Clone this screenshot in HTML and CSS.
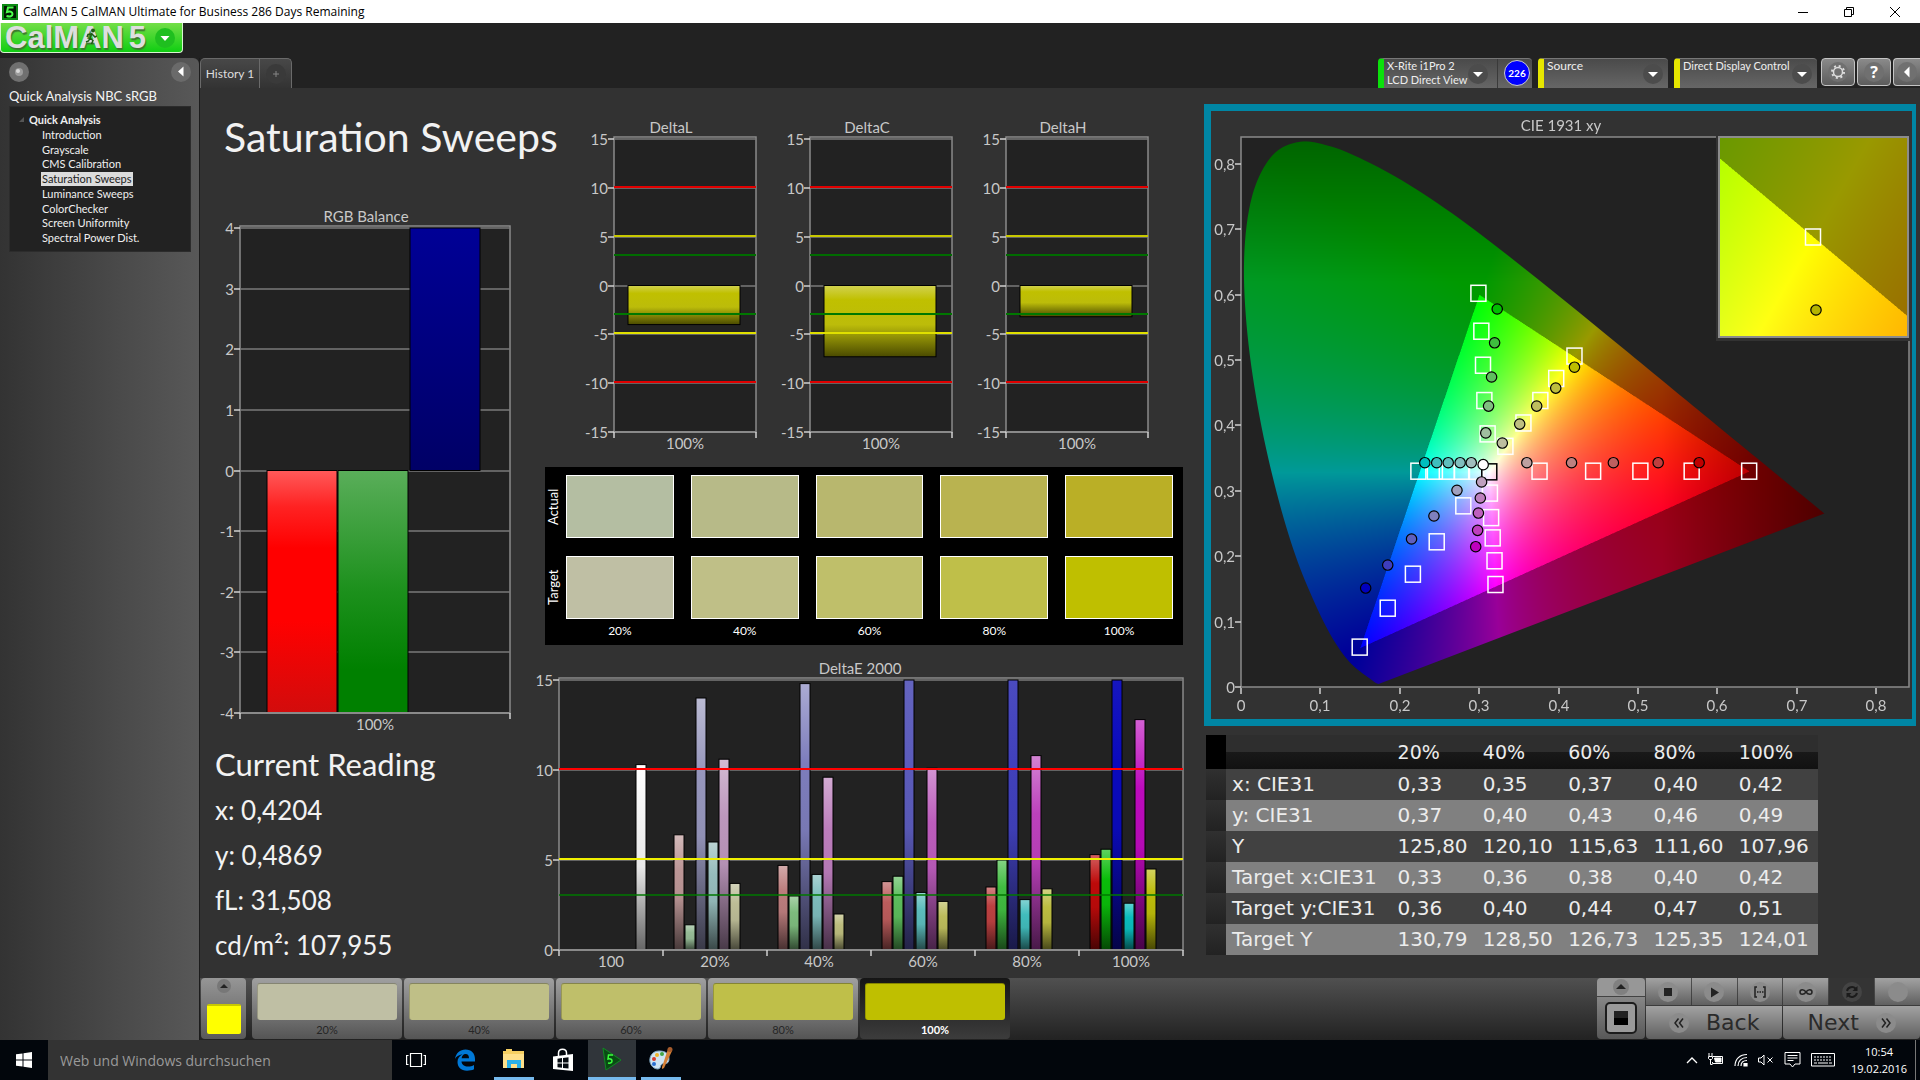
FILE: index.html
```html
<!DOCTYPE html>
<html lang="en">
<head>
    <meta charset="UTF-8">
    <meta name="viewport" content="width=device-width, initial-scale=1.0">
    <title>CalMAN 5 CalMAN Ultimate for Business</title>
    <link rel="stylesheet" href="styles.css">
</head>
<body>
    <div class="titlebar">
        <svg class="app-icon" width="16" height="16" viewBox="0 0 16 16"><rect width="16" height="16" fill="#031a03"/><rect x="1" y="1" width="14" height="14" fill="none" stroke="#0b8a12" stroke-width="2"/><path d="M11.500 3.500H6L5 8c3-1 5.500-.500 5.500 2S8 13 4.500 12" fill="none" stroke="#4dff4d" stroke-width="2"/></svg>
        <span class="window-title">CalMAN 5 CalMAN Ultimate for Business 286 Days Remaining</span>
        <button class="win-btn" aria-label="Minimize"><svg width="12" height="12" viewBox="0 0 12 12"><path d="M1 6.500h10"/></svg></button>
        <button class="win-btn" aria-label="Restore"><svg width="12" height="12" viewBox="0 0 12 12"><path d="M1.500 3.500h7v7h-7zM3.500 3.500v-2h7v7h-2"/></svg></button>
        <button class="win-btn" aria-label="Close"><svg width="12" height="12" viewBox="0 0 12 12"><path d="M1 1l10 10M11 1L1 11"/></svg></button>
    </div>

    <div class="header">
        <button class="logo">
            <span class="logo-text">CalMAN<span class="logo-five">5</span></span>
            <svg class="logo-runner" width="12" height="18" viewBox="0 0 12 18"><circle cx="8" cy="2.500" r="2" fill="#1d5a14"/><path d="M7 5L5 10l3 2.500L6.500 16M5 10L3.500 13 1 14M7 6l3 3 2-1M6.500 6L3 6.500 2 9" fill="none" stroke="#1d5a14" stroke-width="1.500"/></svg>
            <svg class="logo-caret" width="20" height="20" viewBox="0 0 20 20"><circle cx="10" cy="10" r="10" fill="#1fbf1f"/><path d="M5.500 8h9L10 13z" fill="#fff"/></svg>
        </button>
    </div>

    <div class="app">
        <aside class="sidebar">
            <div class="sidebar-top">
                <button class="round-btn" aria-label="Options"><svg width="20" height="20" viewBox="0 0 20 20"><circle cx="10" cy="10" r="10" fill="#707070"/><circle cx="10" cy="10" r="4" fill="#9c9c9c"/><circle cx="9" cy="9" r="2" fill="#d8d8d8"/></svg></button>
                <button class="round-btn" aria-label="Collapse"><svg width="20" height="20" viewBox="0 0 20 20"><circle cx="10" cy="10" r="10" fill="#6a6a6a"/><path d="M12.500 4.500v10L7 9.500z" fill="#fff"/></svg></button>
            </div>
            <div class="workflow-name">Quick Analysis NBC sRGB</div>
            <nav class="tree">
                <div class="tree-root"><svg width="5" height="5" viewBox="0 0 5 5"><path d="M5 0v5H0z" fill="#555"/></svg>Quick Analysis</div>
                <ul>
                    <li><a href="#">Introduction</a></li>
                    <li><a href="#">Grayscale</a></li>
                    <li><a href="#">CMS Calibration</a></li>
                    <li><a href="#" class="selected">Saturation Sweeps</a></li>
                    <li><a href="#">Luminance Sweeps</a></li>
                    <li><a href="#">ColorChecker</a></li>
                    <li><a href="#">Screen Uniformity</a></li>
                    <li><a href="#">Spectral Power Dist.</a></li>
                </ul>
            </nav>
        </aside>

        <div class="workspace">
            <div class="toolbar">
                <div class="tabs">
                    <button class="tab">History 1</button>
                    <button class="tab tab-add" aria-label="Add history"><svg width="20" height="20" viewBox="0 0 20 20"><circle cx="10" cy="10" r="10" fill="#3a3a3a"/><path d="M10 7v6M7 10h6" stroke="#858585"/></svg></button>
                </div>
                <div class="devices">
                    <button class="device device-meter">
                        <span class="device-text">X-Rite i1Pro 2<br>LCD Direct View</span>
                        <svg class="caret" width="20" height="20" viewBox="0 0 20 20"><circle cx="10" cy="10" r="10" fill="#4c4c4c"/><path d="M5 8h10l-5 5z" fill="#fff"/></svg>
                        <span class="badge-cell"><span class="badge">226</span></span>
                    </button>
                    <button class="device device-source">
                        <span class="device-text">Source</span>
                        <svg class="caret" width="20" height="20" viewBox="0 0 20 20"><circle cx="10" cy="10" r="10" fill="#4c4c4c"/><path d="M5 8h10l-5 5z" fill="#fff"/></svg>
                    </button>
                    <button class="device device-display">
                        <span class="device-text">Direct Display Control</span>
                        <svg class="caret" width="20" height="20" viewBox="0 0 20 20"><circle cx="10" cy="10" r="10" fill="#4c4c4c"/><path d="M5 8h10l-5 5z" fill="#fff"/></svg>
                    </button>
                    <div class="tool-buttons">
                        <button class="tool" aria-label="Settings"><svg width="20" height="20" viewBox="0 0 20 20"><circle cx="10" cy="10" r="10" fill="#707070"/><circle cx="10" cy="10" r="4.500" fill="none" stroke="#ddd" stroke-width="1.500"/><circle cx="10" cy="10" r="6" fill="none" stroke="#ddd" stroke-width="2" stroke-dasharray="2 2.712"/></svg></button>
                        <button class="tool tool-help" aria-label="Help"><span>?</span></button>
                        <button class="tool tool-last" aria-label="Collapse toolbar"><svg width="20" height="20" viewBox="0 0 20 20"><circle cx="10" cy="10" r="10" fill="#707070"/><path d="M12.500 4.500v11L7 10z" fill="#fff"/></svg></button>
                    </div>
                </div>
            </div>

            <main class="content">
                <section class="col-left">
                    <h1>Saturation Sweeps</h1>
                    <svg class="chart" id="rgbBalance" viewBox="0 0 330 540"></svg>
                    <div class="reading">
                        <h2>Current Reading</h2>
                        <p>x: 0,4204</p>
                        <p>y: 0,4869</p>
                        <p>fL: 31,508</p>
                        <p>cd/m²: 107,955</p>
                    </div>
                </section>

                <section class="col-center">
                    <div class="delta-row">
                        <svg class="chart" id="deltaL" viewBox="0 0 196 340"></svg>
                        <svg class="chart" id="deltaC" viewBox="0 0 196 340"></svg>
                        <svg class="chart" id="deltaH" viewBox="0 0 196 340"></svg>
                    </div>
                    <div class="compare">
                        <span class="compare-side">Actual</span>
                        <span class="patch a20"></span><span class="patch a40"></span><span class="patch a60"></span><span class="patch a80"></span><span class="patch a100"></span>
                        <span class="compare-side">Target</span>
                        <span class="patch t20"></span><span class="patch t40"></span><span class="patch t60"></span><span class="patch t80"></span><span class="patch t100"></span>
                        <span></span>
                        <span class="patch-label">20%</span><span class="patch-label">40%</span><span class="patch-label">60%</span><span class="patch-label">80%</span><span class="patch-label">100%</span>
                    </div>
                    <svg class="chart" id="deltaE" viewBox="0 0 674 330"></svg>
                </section>

                <section class="col-right">
                    <div class="cie">
                        <canvas id="cieFill" width="1402" height="1216"></canvas>
                        <svg class="chart" id="cieAxes" viewBox="0 0 701 608"></svg>
                    </div>
                    <table class="results">
                        <thead>
                            <tr><th class="handle"></th><th></th><th>20%</th><th>40%</th><th>60%</th><th>80%</th><th>100%</th></tr>
                        </thead>
                        <tbody>
                            <tr><td class="handle"></td><td>x: CIE31</td><td>0,33</td><td>0,35</td><td>0,37</td><td>0,40</td><td>0,42</td></tr>
                            <tr><td class="handle"></td><td>y: CIE31</td><td>0,37</td><td>0,40</td><td>0,43</td><td>0,46</td><td>0,49</td></tr>
                            <tr><td class="handle"></td><td>Y</td><td>125,80</td><td>120,10</td><td>115,63</td><td>111,60</td><td>107,96</td></tr>
                            <tr><td class="handle"></td><td>Target x:CIE31</td><td>0,33</td><td>0,36</td><td>0,38</td><td>0,40</td><td>0,42</td></tr>
                            <tr><td class="handle"></td><td>Target y:CIE31</td><td>0,36</td><td>0,40</td><td>0,44</td><td>0,47</td><td>0,51</td></tr>
                            <tr><td class="handle"></td><td>Target Y</td><td>130,79</td><td>128,50</td><td>126,73</td><td>125,35</td><td>124,01</td></tr>
                        </tbody>
                    </table>
                </section>
            </main>

            <footer class="strip">
                <button class="strip-current" aria-label="Current patch">
                    <svg width="14" height="14" viewBox="0 0 14 14"><circle cx="7" cy="7" r="7" fill="#777"/><path d="M3 9h8L7 5z" fill="#222"/></svg>
                    <span class="current-color"></span>
                </button>
                <div class="strip-steps">
                    <button class="step"><span class="step-color t20"></span>20%</button>
                    <button class="step"><span class="step-color t40"></span>40%</button>
                    <button class="step"><span class="step-color t60"></span>60%</button>
                    <button class="step"><span class="step-color t80"></span>80%</button>
                    <button class="step active"><span class="step-color t100"></span>100%</button>
                </div>
                <div class="pattern">
                    <button class="pattern-up" aria-label="Expand patterns"><svg width="16" height="16" viewBox="0 0 16 16"><circle cx="8" cy="8" r="8" fill="#808080"/><path d="M3 10h10L8 5z" fill="#222"/></svg></button>
                    <button class="pattern-window" aria-label="Pattern window"><svg width="32" height="32" viewBox="0 0 32 32"><rect x="1" y="1" width="30" height="30" rx="4" fill="#9a9a9a" stroke="#1c1c1c" stroke-width="2"/><rect x="9" y="9" width="14" height="14" fill="#000"/><path d="M9 9h14v7H9z" fill="#222"/></svg></button>
                </div>
                <div class="controls">
                    <button class="ctl" aria-label="Stop"><svg width="20" height="20" viewBox="0 0 20 20"><circle cx="10" cy="10" r="10"/><path d="M6 6h8v8H6z" fill="#222"/></svg></button>
                    <button class="ctl" aria-label="Play"><svg width="20" height="20" viewBox="0 0 20 20"><circle cx="10" cy="10" r="10"/><path d="M7 5.500v10l8-5z" fill="#222"/></svg></button>
                    <button class="ctl" aria-label="Read series"><svg width="20" height="20" viewBox="0 0 20 20"><circle cx="10" cy="10" r="10"/><path d="M7 5H5v10h2M13 5h2v10h-2M7 10h1.500M9.500 10h1.500M12 10h1.500" fill="none" stroke="#222" stroke-width="1.500"/></svg></button>
                    <button class="ctl" aria-label="Read continuously"><svg width="20" height="20" viewBox="0 0 20 20"><circle cx="10" cy="10" r="10"/><path d="M10 10c-2-3-6-3-6 0s4 3 6 0 6-3 6 0-4 3-6 0z" fill="none" stroke="#222" stroke-width="1.500"/></svg></button>
                    <button class="ctl ctl-dark" aria-label="Refresh"><svg width="20" height="20" viewBox="0 0 20 20"><circle cx="10" cy="10" r="10"/><path d="M5 9c1-4 6-5 8.500-2.500M15 11c-1 4-6 5-8.500 2.500" fill="none" stroke="#1b1b1b" stroke-width="2"/><path d="M15.500 4v5h-5zM4.500 16v-5h5z" fill="#1b1b1b"/></svg></button>
                    <button class="ctl" aria-label="Record"><svg width="20" height="20" viewBox="0 0 20 20"><circle cx="10" cy="10" r="10"/></svg></button>
                    <button class="nav-btn"><svg width="20" height="20" viewBox="0 0 20 20"><circle cx="10" cy="10" r="10"/><path d="M9.500 5.500L6 10l3.500 4.500M14 5.500L10.500 10l3.500 4.500" fill="none" stroke="#222" stroke-width="1.500"/></svg>Back</button>
                    <button class="nav-btn">Next<svg width="20" height="20" viewBox="0 0 20 20"><circle cx="10" cy="10" r="10"/><path d="M6 5.500L9.500 10 6 14.500M10.500 5.500L14 10l-3.500 4.500" fill="none" stroke="#222" stroke-width="1.500"/></svg></button>
                </div>
            </footer>
        </div>
    </div>

    <div class="taskbar">
        <button class="task-btn" aria-label="Start"><svg width="16" height="16" viewBox="0 0 16 16" fill="#fff"><path d="M0 2.300L6.500 1.400v6.100H0zM7.500 1.200L16 0v7.500H7.500zM0 8.500h6.500v6.100L0 13.700zM7.500 8.500H16V16l-8.500-1.200z"/></svg></button>
        <input class="search" type="text" placeholder="Web und Windows durchsuchen" aria-label="Web und Windows durchsuchen">
        <button class="task-btn" aria-label="Task view"><svg width="20" height="16" viewBox="0 0 20 16" fill="none" stroke="#fff" stroke-width="1.200"><path d="M4.500 1.500h11v13h-11zM2.500 3.500H.6v9h1.900M17.500 3.500h1.900v9h-1.900"/></svg></button>
        <button class="task-btn" aria-label="Edge"><svg width="22" height="22" viewBox="0 0 22 22"><path d="M1 10C2 4 6 .5 11.500.5 17.500.5 21 4.500 21 10v2.500H7.500c.3 3.500 3 5 6.500 5 2.300 0 4.300-.6 6-1.600v4.400c-2 1-4.400 1.400-7 1.400-6 0-9.500-3.500-9.500-8.700 0-3.500 1.800-6.200 5-7.800C4.500 6 2.300 7.500 1 10zm6.600-.8H15C15 6.500 13.800 5 11.500 5 9.300 5 8 6.700 7.600 9.200z" fill="#0078d7"/></svg></button>
        <button class="task-btn running" aria-label="Explorer"><svg width="22" height="20" viewBox="0 0 22 20"><path d="M0 2h3V0h6v2h12v17H0z" fill="#f6cf62"/><path d="M0 5h21v14H0z" fill="#ffe08a"/><path d="M4 11h14v8h-4v-4H8v4H4z" fill="#2bb0e8"/></svg></button>
        <button class="task-btn" aria-label="Store"><svg width="22" height="24" viewBox="0 0 22 24"><path d="M1 8.500L21 6v17L1 21z" fill="#fff"/><path d="M6.500 8V5c0-5 8-5 8 0v2" fill="none" stroke="#fff" stroke-width="1.500"/><path d="M5.500 10.700l4.500-.6v4.400H5.500zM11 10l5.500-.7v5.200H11zM5.500 15.500H10v4.300l-4.500-.5zM11 15.500h5.500v5L11 19.900z" fill="#050a10"/></svg></button>
        <button class="task-btn running focused" aria-label="CalMAN"><svg width="22" height="24" viewBox="0 0 22 24"><path d="M2 1l18 12L5 23z" fill="#0a4a14" stroke="#0f8a22"/><path d="M12 8H7.500L7 12c3-.5 4 .5 4 2s-1.500 2.500-4 2" fill="none" stroke="#3cff3c" stroke-width="1.500"/></svg></button>
        <button class="task-btn running" aria-label="Paint"><svg width="26" height="24" viewBox="0 0 26 24"><path d="M11 4C4 4 1 10 2 15c1 4 4 7 8 7 3 0 2-4 4-5s7 1 7-5-4-8-10-8z" fill="#cfe4f2" stroke="#7fa5c0"/><circle cx="6" cy="12" r="2" fill="#d83b2e"/><circle cx="9" cy="8" r="2" fill="#f0b429"/><circle cx="14" cy="7" r="2" fill="#42a545"/><circle cx="6" cy="17" r="2" fill="#2b6fd0"/><path d="M20 2l4 2-8 17-2 1v-2z" fill="#d58036"/><circle cx="22" cy="2.500" r="2.500" fill="#a65b2c"/></svg></button>
        <div class="tray">
            <svg width="12" height="8" viewBox="0 0 12 8"><path d="M1 7l5-5 5 5" fill="none" stroke="#fff" stroke-width="1.300"/></svg>
            <svg width="16" height="14" viewBox="0 0 16 14" fill="none" stroke="#fff"><path d="M5 3.500h9.500v7h-10V9"/><path d="M6.500 5h6.500v4H7.500z" fill="#fff"/><path d="M1 0v3M4 0v3M.500 3.500h4v2l-1 1h-2l-1-1zM2.500 6.500v5h2"/></svg>
            <svg width="14" height="14" viewBox="0 0 14 14" fill="none" stroke="#fff" stroke-width="1.200"><path d="M1 13C1 6 6 1.500 13 1.500M4 13c0-5 3.500-8.500 9-8.500M7 13c0-3.500 2-5.500 6-5.500" /><path d="M10 13v-2.500h3V13z" fill="#fff"/></svg>
            <svg width="16" height="12" viewBox="0 0 16 12" fill="none" stroke="#fff"><path d="M.500 4v4H3l3 3V1L3 4zM9.500 3.500l5 5M14.500 3.500l-5 5"/></svg>
            <svg width="17" height="16" viewBox="0 0 17 16" fill="none" stroke="#fff"><path d="M1 .500h15v11.500h-5L8.500 15 6 12H1zM3.500 3.500h10M3.500 6h10M3.500 8.500h6"/></svg>
            <svg width="24" height="14" viewBox="0 0 24 14" fill="none" stroke="#fff"><path d="M.500.500h23v12.500H.500z"/><path d="M3 4h18M3 7h18" stroke-dasharray="2 1"/><path d="M3 10h3M7 10h10M18 10h3"/></svg>
            <div class="clock"><span>10:54</span><span>19.02.2016</span></div>
        </div>
    </div>

    <script src="charts.js"></script>
</body>
</html>
```
FILE: styles.css
```css
* {
    box-sizing: border-box;
}

body {
    margin: 0;
    min-height: 100vh;
    display: flex;
    flex-direction: column;
    background: #222;
    color: #eee;
    font-family: Lato, "Open Sans", sans-serif;
    font-size: 13px;
}

button {
    margin: 0;
    padding: 0;
    border: 0;
    background: none;
    color: inherit;
    font-family: inherit;
    cursor: pointer;
}

svg {
    display: block;
    flex: none;
}

/* window frame */
.titlebar {
    display: flex;
    align-items: center;
    height: 23px;
    padding-left: 2px;
    padding-right: 2px;
    background: #fff;
    color: #000;
    font-family: "Open Sans", sans-serif;
    font-size: 12px;
}

.window-title {
    flex: 1;
    padding-left: 5px;
}

.win-btn {
    display: flex;
    justify-content: center;
    align-items: center;
    width: 46px;
    height: 20px;
}

.win-btn svg {
    fill: none;
    stroke: #000;
}

.header {
    height: 35px;
}

.logo {
    position: relative;
    display: flex;
    align-items: center;
    justify-content: space-between;
    width: 183px;
    height: 30px;
    padding: 0 7px 0 4px;
    border: 1px solid #d8f5d0;
    border-top: 0;
    border-radius: 0 0 4px 4px;
    background: linear-gradient(#74de48, #0fce12);
}

.logo-text {
    font-family: "Liberation Sans", sans-serif;
    font-size: 31px;
    line-height: 28px;
    font-weight: bold;
    color: #dedede;
    text-shadow: 1px 2px 1px #3c7a30;
}

.logo-five {
    margin-left: 5px;
}

/* runner sits over the second A of the logo */
.logo-runner {
    position: absolute;
    left: 84px;
    top: 5px;
}

.app {
    flex: 1;
    display: flex;
}

/* sidebar */
.sidebar {
    width: 199px;
    padding: 4px 8px 0 9px;
    border-radius: 0 6px 0 0;
    background: linear-gradient(90deg, #333, #4a4a4a 60%, #585858);
}

.sidebar-top {
    display: flex;
    justify-content: space-between;
    height: 26px;
}

.round-btn {
    height: 20px;
}

.workflow-name {
    height: 18px;
    font-size: 13px;
    line-height: 16px;
    color: #f4f4f4;
}

.tree {
    height: 146px;
    padding: 4px 0 0 9px;
    border: 1px solid #2c2c2c;
    background: #222;
    font-size: 11px;
}

.tree-root {
    display: flex;
    align-items: center;
    gap: 5px;
    height: 17px;
    font-weight: bold;
}

.tree ul {
    display: flex;
    flex-direction: column;
    justify-content: space-between;
    height: 117px;
    margin: 0;
    padding: 0 0 0 22px;
    list-style: none;
}

.tree li {
    line-height: 14px;
}

.tree a {
    display: block;
    width: max-content;
    padding: 0 1px;
    color: #f0f0f0;
    text-decoration: none;
}

.tree a.selected {
    background: #dcdcdc;
    color: #222;
}

/* top toolbar */
.workspace {
    flex: 1;
    min-width: 0;
    display: flex;
    flex-direction: column;
    border-left: 1px solid #1c1c1c;
    background: #323232;
}

.toolbar {
    display: flex;
    justify-content: space-between;
    height: 30px;
    background: #222;
}

.tabs {
    display: flex;
    border: 1px solid #6a6a6a;
    border-bottom: 0;
    border-radius: 5px 5px 0 0;
    background: linear-gradient(#484848, #333);
}

.tab {
    width: 58px;
    font-size: 12px;
    color: #ddd;
}

.tab-add {
    display: flex;
    align-items: center;
    justify-content: center;
    width: 32px;
    border-left: 1px solid #6a6a6a;
}

.devices {
    display: flex;
    gap: 6px;
}

.device {
    display: flex;
    border-left: 6px solid #e6e600;
    border-top: 1px solid #777;
    border-radius: 4px 4px 0 0;
    background: linear-gradient(#4a4a4a, #666);
    font-size: 12px;
    line-height: 14px;
    text-align: left;
}

.device-text {
    flex: 1;
    min-width: 0;
    padding: 0 0 0 3px;
    white-space: nowrap;
}

.caret {
    margin: 5px 5px 0 0;
}

.device-meter {
    width: 154px;
    font-size: 11px;
    border-left-color: #0be00b;
}

.device-meter .caret {
    margin-right: 9px;
}

.device-source {
    width: 130px;
}

.device-display {
    width: 143px;
    font-size: 11px;
}

.badge-cell {
    height: 29px;
    padding: 1px 2px 0 6px;
    border-left: 1px solid #3a3a3a;
}

.badge {
    display: flex;
    align-items: center;
    justify-content: center;
    width: 26px;
    height: 26px;
    border: 1px solid #ccc;
    border-radius: 50%;
    background: #00f;
    color: #fff;
    font-size: 10px;
    font-weight: bold;
}

.tool-buttons {
    display: flex;
    gap: 2px;
}

.device-display + .tool-buttons {
    margin-left: -2px;
}

.tool {
    display: flex;
    align-items: center;
    justify-content: center;
    width: 34px;
    height: 28px;
    border: 1px solid #c4c4c4;
    border-radius: 4px;
    background: linear-gradient(#8a8a8a, #5c5c5c);
}

.tool-help span {
    width: 20px;
    height: 20px;
    border-radius: 50%;
    background: #707070;
    font-family: "Open Sans", sans-serif;
    font-size: 16px;
    line-height: 20px;
    font-weight: bold;
    color: #fff;
}

.tool-last {
    width: 27px;
    border-right: 0;
    border-radius: 4px 0 0 4px;
}

/* charts */
.content {
    flex: 1;
    display: grid;
    grid-template-columns: 330fr 674fr 716fr;
    align-items: start;
}

.content > section {
    min-width: 0;
}

.chart {
    width: 100%;
    height: auto;
    font-size: 15px;
    fill: #c8c8c8;
}

.col-left h1 {
    height: 113px;
    margin: 0;
    padding: 22px 0 0 24px;
    font-size: 41px;
    line-height: 54px;
    font-weight: normal;
    white-space: nowrap;
    color: #f2f2f2;
}

.reading {
    padding-left: 15px;
}

.reading h2,
.reading p {
    margin: 0;
    font-weight: normal;
    color: #f2f2f2;
}

.reading h2 {
    font-size: 31px;
    line-height: 47px;
}

.reading p {
    font-size: 26px;
    line-height: 45px;
}

.col-center {
    padding-top: 27px;
}

.delta-row {
    display: grid;
    grid-template-columns: repeat(3, 1fr);
    padding: 0 51px 0 35px;
}

.compare {
    display: grid;
    grid-template-columns: 4px repeat(5, 1fr);
    grid-template-rows: 63px 63px 14px;
    gap: 18px 17px;
    height: 178px;
    margin: 12px 21px 0 15px;
    padding: 8px 10px 0 0;
    background: #000;
    font-size: 12px;
}

.compare-side {
    justify-self: start;
    width: 16px;
    writing-mode: vertical-rl;
    transform: rotate(180deg);
    text-align: center;
    line-height: 16px;
    font-size: 13px;
    color: #fff;
}

.patch {
    border: 1px solid #fff;
}

.patch-label {
    margin-top: -14px;
    text-align: center;
    color: #fff;
}

.a20 { background: #b4bea2; }
.a40 { background: #b7ba88; }
.a60 { background: #b8b76e; }
.a80 { background: #b9b350; }
.a100 { background: #baaf26; }
.t20 { background: #bfbfa4; }
.t40 { background: #bfbf87; }
.t60 { background: #bfbf6a; }
.t80 { background: #bfbf49; }
.t100 { background: #bfbf00; }

.col-right {
    padding-top: 16px;
}

.cie {
    display: grid;
    margin-right: 4px;
    border: 7px solid #0086a4;
    border-right-width: 4px;
}

.cie canvas,
.cie svg {
    grid-area: 1 / 1;
    width: 100%;
    height: auto;
}

.results {
    width: 612px;
    margin: 9px 0 0 2px;
    border-collapse: collapse;
    table-layout: fixed;
    font-family: "DejaVu Sans", sans-serif;
    font-size: 20px;
    line-height: 25px;
    color: #ececec;
}

.results th,
.results td {
    height: 31px;
    padding: 0 0 0 6px;
    font-weight: normal;
    text-align: left;
    white-space: nowrap;
}

.results th {
    width: 85px;
    height: 34px;
    font-size: 19px;
}

.results th:nth-child(2) {
    width: 165px;
}

.results .handle {
    width: 20px;
    background: linear-gradient(#303030, #222);
}

.results thead .handle {
    background: #000;
}

.results thead tr {
    background: linear-gradient(#2e2e2e 50%, #191919 50%, #111);
}

.results tbody tr {
    background: #414141;
}

.results tbody tr:nth-child(even) {
    background: #808080;
}

/* bottom strip */
.strip {
    display: flex;
    height: 62px;
    padding-bottom: 1px;
    padding-left: 1px;
    background: linear-gradient(#505050, #222);
}

.strip-current {
    display: flex;
    flex-direction: column;
    align-items: center;
    gap: 11px;
    width: 45px;
    padding-top: 1px;
    border-radius: 4px;
    background: linear-gradient(#969696, #5a5a5a);
}

.current-color {
    width: 34px;
    height: 30px;
    border-radius: 2px;
    border-top: 2px solid #c8c800;
    background: #ff0;
}

.strip-steps {
    display: flex;
    gap: 2px;
    margin-left: 6px;
}

.step {
    display: flex;
    flex-direction: column;
    align-items: center;
    gap: 3px;
    width: 150px;
    padding-top: 5px;
    border-radius: 4px;
    background: linear-gradient(#a0a0a0, #555);
    font-size: 11px;
    color: #262626;
}

.step-color {
    width: 140px;
    height: 37px;
    border-radius: 3px;
    border-top: 1px solid rgba(0, 0, 0, 0.3);
    border-left: 1px solid rgba(0, 0, 0, 0.2);
}

.step.active {
    background: linear-gradient(#151515, #3c3c3c);
    color: #fff;
    font-weight: bold;
}

.pattern {
    display: flex;
    flex-direction: column;
    gap: 1px;
    width: 48px;
    margin-left: auto;
}

.pattern button {
    display: flex;
    align-items: center;
    justify-content: center;
}

.pattern-up {
    height: 18px;
    border-radius: 4px 4px 0 0;
    background: #979797;
}

.pattern-window {
    flex: 1;
    border-radius: 0 0 4px 4px;
    background: linear-gradient(#868686, #585858);
}

.controls {
    display: grid;
    grid-template-columns: repeat(6, 1fr);
    gap: 1px;
    width: 274px;
    margin-left: 1px;
}

.ctl,
.nav-btn {
    display: flex;
    align-items: center;
    justify-content: center;
    background: linear-gradient(#a2a2a2, #606060);
}

.ctl circle,
.nav-btn circle {
    fill: #8b8b8b;
}

.ctl-dark {
    background: #343434;
}

.ctl-dark circle {
    fill: #444;
}

.nav-btn {
    grid-column: span 3;
    gap: 17px;
    border-radius: 0 0 4px 4px;
    font-family: "DejaVu Sans", sans-serif;
    font-size: 22px;
    line-height: 26px;
    color: #2a2a2a;
}

/* taskbar */
.taskbar {
    display: flex;
    height: 40px;
    background: #02060c;
    font-family: "Open Sans", sans-serif;
}

.task-btn {
    display: flex;
    align-items: center;
    justify-content: center;
    width: 48px;
    margin-right: 1px;
}

.task-btn:first-child {
    margin-right: 0;
}

.running {
    width: 40px;
    margin: 0 5px 0 4px;
    border-bottom: 3px solid #76b9ed;
}

.focused {
    width: 48px;
    margin: 0 1px 0 0;
    background: #30353a;
}

.search {
    width: 344px;
    padding: 0 12px;
    border: 0;
    background: #333;
    color: #ddd;
    font-family: inherit;
    font-size: 14px;
}

.search::placeholder {
    color: #9a9a9a;
}

.tray {
    display: flex;
    align-items: center;
    gap: 10px;
    margin-left: auto;
    margin-right: 4px;
    padding-right: 8px;
    border-right: 1px solid #777;
}

.clock {
    display: flex;
    flex-direction: column;
    align-items: center;
    margin-left: 6px;
    font-size: 11px;
    line-height: 17px;
    color: #fff;
}
```
FILE: charts.js
```js
const SVG_NS = 'http://www.w3.org/2000/svg';
let gradientCount = 0;

function add(parent, tag, attrs, text) {
    const el = document.createElementNS(SVG_NS, tag);
    for (const key in attrs) {
        el.setAttribute(key, attrs[key]);
    }
    if (text !== undefined) {
        el.textContent = text;
    }
    parent.appendChild(el);
    return el;
}

function line(svg, x1, y1, x2, y2, color, width) {
    add(svg, 'line', { x1: x1, y1: y1, x2: x2, y2: y2, stroke: color, 'stroke-width': width || 1 });
}

function gradient(svg, stops) {
    const id = 'bar' + gradientCount++;
    const g = add(svg, 'linearGradient', { id: id, x1: 0, y1: 0, x2: 0, y2: 1 });
    stops.forEach(([offset, color]) => add(g, 'stop', { offset: offset, 'stop-color': color }));
    return 'url(#' + id + ')';
}

function mix(rgb, other, amount) {
    return 'rgb(' + rgb.map((c, i) => Math.round(c + (other[i] - c) * amount)).join(',') + ')';
}

// light at the top, dark towards the bottom
function barStops(rgb, clipped) {
    return [
        [0, mix(rgb, [255, 255, 255], clipped ? 0.05 : 0.35)],
        [0.3, mix(rgb, [255, 255, 255], 0)],
        [0.55, mix(rgb, [0, 0, 0], 0.04)],
        [1, mix(rgb, [0, 0, 0], 0.62)]
    ];
}

// plot: left, right, top, bottom in viewBox units; top and bottom are the max and min values
function barChart(id, o) {
    const svg = document.getElementById(id);
    const p = o.plot;
    const toY = v => p.top + (o.max - v) * (p.bottom - p.top) / (o.max - o.min);

    add(svg, 'text', { x: o.titleX, y: p.top - 6, 'text-anchor': 'middle' }, o.title);
    add(svg, 'rect', { x: p.left, y: p.top - 2, width: p.right - p.left, height: p.bottom - p.top + 2, fill: '#222', stroke: '#8a8a8a', 'stroke-width': 1.5 });

    for (let v = o.min; v <= o.max; v += o.step) {
        const y = Math.round(toY(v));
        line(svg, p.left, y, p.right, y, '#7a7a7a', 1.5);
        line(svg, p.left - 6, y, p.left, y, '#d0d0d0', 1.5);
        add(svg, 'text', { x: p.left - 6, y: y + 6, 'text-anchor': 'end' }, v);
    }

    o.bars.forEach(bar => {
        const y1 = toY(Math.min(o.max, Math.max(bar.value, 0)));
        const y2 = toY(Math.max(o.min, Math.min(bar.value, 0)));
        add(svg, 'rect', { x: bar.x, y: y1, width: bar.width, height: y2 - y1, fill: gradient(svg, bar.stops), stroke: '#000' });
    });

    (o.limits || []).forEach(([v, color, width]) => {
        const y = Math.round(toY(v)) - 1;
        line(svg, p.left, y, p.right, y, color, width);
    });

    line(svg, p.left, p.bottom, p.right, p.bottom, '#8a8a8a', 2);
    const slot = (p.right - p.left) / o.labels.length;
    o.labels.forEach((label, i) => {
        add(svg, 'text', { x: p.left + slot * (i + 0.5), y: p.bottom + 17, 'text-anchor': 'middle' }, label);
    });
    for (let i = 0; i <= o.labels.length; i++) {
        line(svg, p.left + slot * i, p.bottom, p.left + slot * i, p.bottom + 6, '#d0d0d0', 1.5);
    }
}

barChart('rgbBalance', {
    title: 'RGB Balance', titleX: 166, min: -4, max: 4, step: 1,
    plot: { left: 40, right: 310, top: 27, bottom: 512 },
    labels: ['100%'],
    bars: [
        { x: 67, width: 70, value: -5, stops: [[0, '#ff5a5a'], [0.15, '#ff2222'], [0.32, '#ff0000'], [0.62, '#ff0000'], [1, '#d20c0c']] },
        { x: 138, width: 70, value: -5, stops: [[0, '#5aae5a'], [0.5, '#1c901c'], [0.82, '#008000'], [1, '#008000']] },
        { x: 210, width: 70, value: 5, stops: [[0, '#000096'], [1, '#000066']] }
    ]
});

const deltaLimits = [
    [10, '#e00000', 2], [5, '#c8c800', 2], [3, '#006c00', 2],
    [-3, '#007800', 2], [-5, '#e0e000', 2], [-10, '#e00000', 2]
];
[['deltaL', 'DeltaL', -4], ['deltaC', 'DeltaC', -7.3], ['deltaH', 'DeltaH', -3.2]].forEach(([id, title, value]) => {
    barChart(id, {
        title: title, titleX: 106, min: -15, max: 15, step: 5,
        plot: { left: 49, right: 191, top: 24, bottom: 317 },
        labels: ['100%'],
        limits: deltaLimits,
        bars: [{ x: 63, width: 112, value: value, stops: [[0, '#d2d250'], [0.2, '#c0c000'], [0.55, '#bcbc0a'], [1, '#4a4a00']] }]
    });
});

// red, green, blue, cyan, magenta, yellow at each saturation
const sweeps = [
    { low: 150, values: [6.4, 1.4, 14, 6, 10.6, 3.7] },
    { low: 125, values: [4.7, 3, 14.8, 4.2, 9.6, 2] },
    { low: 92, values: [3.8, 4.1, 20, 3.2, 10.1, 2.7] },
    { low: 65, values: [3.5, 5, 20, 2.8, 10.8, 3.4] },
    { low: 10, values: [5.3, 5.6, 20, 2.6, 12.8, 4.5] }
];
const hues = [[1, 0, 0], [0, 1, 0], [0, 0, 1], [0, 1, 1], [1, 0, 1], [1, 1, 0]];
const sweepBars = [{ x: 106, width: 10, value: 10.3, stops: [[0, '#ffffff'], [0.55, '#e8e8e8'], [1, '#666666']] }];
sweeps.forEach((sweep, i) => {
    sweep.values.forEach((value, j) => {
        const rgb = hues[j].map(c => c ? 188 : sweep.low);
        sweepBars.push({ x: 144 + i * 104 + Math.round(j * 11.2), width: 10, value: value, stops: barStops(rgb, value > 15) });
    });
});
barChart('deltaE', {
    title: 'DeltaE 2000', titleX: 330, min: 0, max: 15, step: 5,
    plot: { left: 29, right: 653, top: 35, bottom: 305 },
    labels: ['100', '20%', '40%', '60%', '80%', '100%'],
    limits: [[10, '#ff0000', 2], [5, '#f0f000', 2], [3, '#007800', 1.5]],
    bars: sweepBars
});

// CIE 1931 diagram
const cie = { left: 30, right: 698, top: 26, bottom: 576, sx: 794, sy: 654 };
const locus = [
    [.1741, .0050], [.1726, .0048], [.1689, .0069],
    [.1644, .0109], [.1566, .0177], [.1440, .0297], [.1355, .0399], [.1241, .0578], [.1096, .0868],
    [.0913, .1327], [.0687, .2007], [.0454, .2950], [.0235, .4127], [.0082, .5384], [.0039, .6548],
    [.0139, .7502], [.0389, .8120], [.0743, .8338], [.1142, .8262], [.1547, .8059], [.1929, .7816],
    [.2296, .7543], [.2658, .7243], [.3016, .6923], [.3373, .6589], [.3731, .6245], [.4087, .5896],
    [.4441, .5547], [.4788, .5202], [.5125, .4866], [.5448, .4544], [.5752, .4242], [.6029, .3965],
    [.6270, .3725], [.6482, .3514], [.6658, .3340], [.6915, .3083], [.7079, .2920], [.7230, .2770], [.7347, .2653]
];

function chromaColor(x, y) {
    const X = x / y;
    const Z = (1 - x - y) / y;
    const rgb = [
        3.2406 * X - 1.5372 - 0.4986 * Z,
        -0.9689 * X + 1.8758 + 0.0415 * Z,
        0.0557 * X - 0.2040 + 1.0570 * Z
    ];
    const inside = Math.min(...rgb) >= 0;
    let level = inside ? 255 : 153;
    if (x > 0.53) level *= 1 - (x - 0.53) * 2.4;
    if (y > 0.62) level *= 1 - (y - 0.62) * 1.6;
    const max = Math.max(...rgb);
    return rgb.map(c => Math.max(0, c) / max * level);
}

// Fill a rectangle of the canvas with the colors of the xy range it covers
function chromaImage(w, h, x0, y0, sx, sy) {
    const c = document.createElement('canvas');
    c.width = w;
    c.height = h;
    const ctx = c.getContext('2d');
    const img = ctx.createImageData(w, h);
    for (let j = 0; j < h; j++) {
        for (let i = 0; i < w; i++) {
            const rgb = chromaColor(x0 + i / sx, Math.max(0.001, y0 - j / sy));
            const k = (j * w + i) * 4;
            img.data[k] = rgb[0];
            img.data[k + 1] = rgb[1];
            img.data[k + 2] = rgb[2];
            img.data[k + 3] = 255;
        }
    }
    ctx.putImageData(img, 0, 0);
    return c;
}

function drawCieFill() {
    const ctx = document.getElementById('cieFill').getContext('2d');
    const s = 2; // canvas pixels per viewBox unit
    const w = (cie.right - cie.left) * s;
    const h = (cie.bottom - cie.top) * s;
    ctx.fillStyle = '#222';
    ctx.fillRect(cie.left * s, cie.top * s, w, h);

    // smooth curve through every point of the horseshoe
    const pts = locus.map(([x, y]) => [(cie.left + x * cie.sx) * s, (cie.bottom - y * cie.sy) * s]);
    ctx.save();
    ctx.beginPath();
    ctx.moveTo(pts[0][0], pts[0][1]);
    for (let i = 0; i < pts.length - 1; i++) {
        const a = pts[Math.max(0, i - 1)];
        const b = pts[i];
        const c = pts[i + 1];
        const d = pts[Math.min(pts.length - 1, i + 2)];
        ctx.bezierCurveTo(
            b[0] + (c[0] - a[0]) / 6, b[1] + (c[1] - a[1]) / 6,
            c[0] - (d[0] - b[0]) / 6, c[1] - (d[1] - b[1]) / 6,
            c[0], c[1]
        );
    }
    ctx.closePath();
    ctx.clip();
    ctx.drawImage(chromaImage(w, h, 0, h / s / cie.sy, cie.sx * s, cie.sy * s), cie.left * s, cie.top * s);
    ctx.restore();

    // zoomed inset
    ctx.fillStyle = '#323232';
    ctx.fillRect(505 * s, 24 * s, 196 * s, 206 * s);
    ctx.drawImage(chromaImage(189 * s, 199 * s, 0.3943, 0.5303, 3780 * s, 4000 * s), 508 * s, 26 * s);
}

const targets = [
    [.376, .33], [.4435, .33], [.503, .33], [.5676, .33], [.64, .33],
    [.3106, .387], [.3065, .438], [.3048, .492], [.3027, .544], [.299, .602],
    [.28, .277], [.2465, .222], [.2165, .1725], [.1848, .1205], [.1495, .061],
    [.2962, .33], [.2783, .33], [.2592, .33], [.2442, .33], [.2234, .33],
    [.3135, .2965], [.315, .259], [.317, .228], [.3193, .193], [.3205, .1567],
    [.333, .368], [.3557, .4037], [.377, .438], [.397, .4717], [.42, .506]
];
const readings = [
    [[.36, .343], [.4163, .343], [.469, .343], [.5254, .343], [.577, .343]],
    [[.3083, .3885], [.3118, .4295], [.3156, .474], [.3194, .5263], [.3227, .578]],
    [[.272, .3007], [.243, .2615], [.2148, .2263], [.1848, .1865], [.157, .1513]],
    [[.29, .343], [.276, .343], [.261, .343], [.2465, .343], [.2315, .343]],
    [[.303, .3135], [.3014, .289], [.299, .266], [.298, .2395], [.2956, .2145]],
    [[.3291, .373], [.351, .402], [.3724, .4295], [.3964, .457], [.42, .489]]
];

function square(svg, cx, cy, color) {
    add(svg, 'rect', { x: cx - 7.5, y: cy - 8, width: 15, height: 16, fill: 'none', stroke: color, 'stroke-width': 1.5 });
}

function dot(svg, cx, cy, color) {
    add(svg, 'circle', { cx: cx, cy: cy, r: 5.2, fill: color, stroke: '#000', 'stroke-width': 1.2 });
}

function drawCieAxes() {
    const svg = document.getElementById('cieAxes');
    const toX = x => cie.left + x * cie.sx;
    const toY = y => cie.bottom - y * cie.sy;

    add(svg, 'text', { x: 350, y: 20, 'text-anchor': 'middle' }, 'CIE 1931 xy');
    add(svg, 'path', { d: 'M505 26H30V576H698V230', fill: 'none', stroke: '#8a8a8a', 'stroke-width': 1.5 });
    add(svg, 'rect', { x: 508, y: 26, width: 189, height: 200, fill: 'none', stroke: '#8c8c8c', 'stroke-width': 2 });

    for (let i = 0; i <= 8; i++) {
        const label = i === 0 ? '0' : '0,' + i;
        const x = Math.round(toX(i / 10));
        const y = Math.round(toY(i / 10));
        line(svg, x, 577, x, 583, '#d0d0d0', 1.5);
        add(svg, 'text', { x: x, y: 600, 'text-anchor': 'middle' }, label);
        line(svg, 24, y, 30, y, '#d0d0d0', 1.5);
        add(svg, 'text', { x: 24, y: y + 6, 'text-anchor': 'end' }, label);
    }

    targets.forEach(([x, y]) => square(svg, toX(x), toY(y), '#fff'));
    square(svg, toX(.3127), toY(.329), '#000');
    readings.forEach((series, i) => {
        series.forEach(([x, y], j) => {
            const low = [160, 128, 95, 62, 0][j];
            dot(svg, toX(x), toY(y), mix(hues[i].map(c => c ? 190 : low), [0, 0, 0], 0));
        });
    });
    dot(svg, toX(.305), toY(.34), '#fff');
    square(svg, 602, 126, '#fff');
    dot(svg, 605, 199, '#b4b400');
}

drawCieFill();
drawCieAxes();
```
